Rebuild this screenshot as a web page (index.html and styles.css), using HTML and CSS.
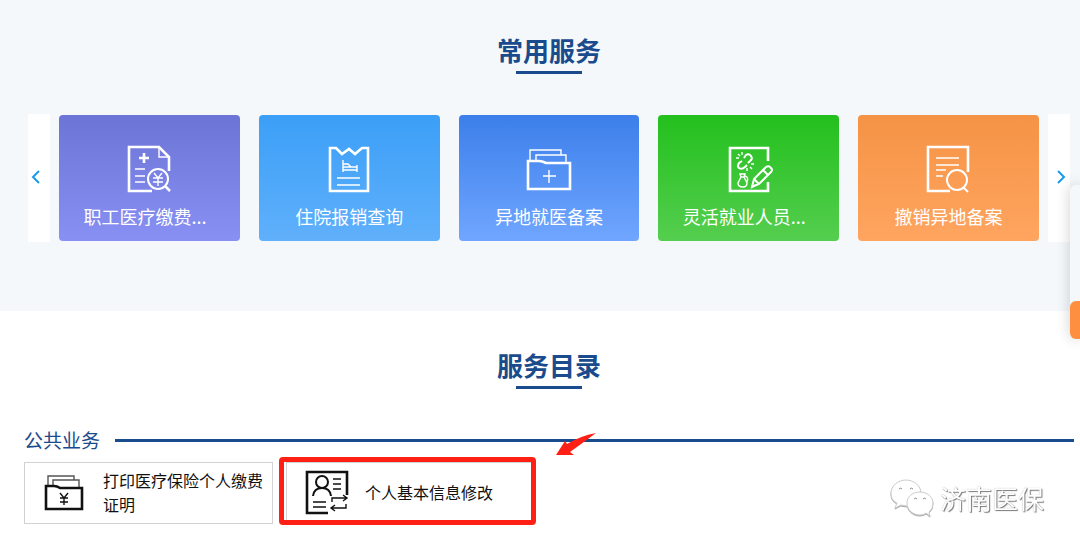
FILE: index.html
```html
<!DOCTYPE html>
<html lang="zh-CN">
<head>
    <meta charset="UTF-8">
    <meta name="viewport" content="width=device-width, initial-scale=1.0">
    <title>医保服务</title>
    <link rel="stylesheet" href="styles.css">
</head>
<body>

    <!-- 常用服务 -->
    <section class="common">
        <h2 class="title">常用服务</h2>
        <div class="slider">
            <button class="arrow arrow-left" type="button" aria-label="上一页">
                <svg width="10" height="16" viewBox="0 0 10 16"><path d="M8 1L2 7l6 6"/></svg>
            </button>
            <ul class="cards">
                <li><a class="card purple" href="#">
                    <svg class="icon" viewBox="0 0 48 48">
                        <path class="bold" d="M27 46H4V2H34L44 12V26"/>
                        <path d="M34 2V12H44M10 24H20M10 31H20M10 37H20"/>
                        <path class="bold" d="M19 8V18M14 13H24M40 41L45 46"/>
                        <circle class="mid" cx="33" cy="34" r="10"/>
                        <path d="M29 28L33 33L37 28M33 33V41M28 33H38M28 37H38"/>
                    </svg>
                    <span class="long">职工医疗缴费...</span>
                </a></li>
                <li><a class="card sky" href="#">
                    <svg class="icon" viewBox="0 0 48 48">
                        <path class="bold" d="M5 3H11L17 9L24 4L30 9L37 3H43V46H5Z"/>
                        <path d="M18 15V27M18 25H32M32 20V27M18 22H32M18 19H23L26 22M12 33H35M12 40H35"/>
                    </svg>
                    <span>住院报销查询</span>
                </a></li>
                <li><a class="card blue" href="#">
                    <svg class="icon" viewBox="0 0 48 48">
                        <path d="M5 16V5H36V10M11 16V10H41V18M24 25V38M18 31H31"/>
                        <path class="bold" d="M3 16H14Q17 16 21 18H45V44H3Z"/>
                    </svg>
                    <span>异地就医备案</span>
                </a></li>
                <li><a class="card green" href="#">
                    <svg class="icon" viewBox="0 0 48 48">
                        <path class="bold" d="M43 16V3H5V46H43V37"/>
                        <path class="mid" d="M27 42L29 34L41 22Q44 20 46 23Q48 25 46 27L34 39ZM29 34L34 39M38 25L43 30M27 42L31 40"/>
                        <path class="mid" d="M19 13L21 10Q24 8 26 11Q28 14 25 16L23 18M17 16L14 18Q12 21 14 23Q17 25 20 22L22 20"/>
                        <path d="M13 9L15 11M17 7V10M11 13H14M25 22L27 24M22 23V26M26 19H29"/>
                        <path d="M15 29H20L19 32L22 38Q22 42 18 42Q13 42 13 38L16 32ZM16 32H19M20 31Q24 32 22 37"/>
                    </svg>
                    <span class="long">灵活就业人员...</span>
                </a></li>
                <li><a class="card orange" href="#">
                    <svg class="icon" viewBox="0 0 48 48">
                        <path class="bold" d="M25 46H3V2H43V27"/>
                        <path d="M11 13H34M11 20H34M11 25H21M11 31H18"/>
                        <circle class="mid" cx="32" cy="35" r="10"/>
                        <path class="mid" d="M38 42L43 47"/>
                    </svg>
                    <span>撤销异地备案</span>
                </a></li>
            </ul>
            <button class="arrow arrow-right" type="button" aria-label="下一页">
                <svg width="10" height="16" viewBox="0 0 10 16"><path d="M2 1l6 6-6 6"/></svg>
            </button>
        </div>
    </section>

    <!-- 服务目录 -->
    <section class="catalog">
        <h2 class="title">服务目录</h2>
        <h3 class="group">公共业务</h3>
        <ul class="items">
            <li><a class="item" href="#">
                <svg class="icon" viewBox="0 0 48 48">
                    <path class="gray" d="M8 18V8H34V12M13 18V12H39V20"/>
                    <path class="bold" d="M6 18H14Q17 18 20 20H42V41H6Z"/>
                    <path d="M20 25L24 30L28 25M24 30V37M20 30H28M20 34H28"/>
                </svg>
                <span>打印医疗保险个人缴费证明</span>
            </a></li>
            <li class="marked">
                <a class="item" href="#">
                    <svg class="icon" viewBox="0 0 48 48">
                        <path class="bold" d="M26 45H5V4H45V27"/>
                        <circle class="mid" cx="20" cy="14" r="6"/>
                        <path class="mid" d="M11 28Q12 20 20 20Q28 20 29 28"/>
                        <path d="M31 11H39M31 16H39M31 21H39M11 34H24M11 39H24"/>
                        <path d="M30 34V30H44M41 27L45 30L41 33M44 36V40H30M33 37L29 40L33 43"/>
                    </svg>
                    <span>个人基本信息修改</span>
                </a>
                <svg class="pointer" width="40" height="24" viewBox="0 0 40 24">
                    <path d="M0 23L9 9L11 12Q24 4 40 1Q28 10 14 20L18 23Z"/>
                </svg>
            </li>
        </ul>
    </section>

    <!-- 右侧悬浮栏 -->
    <aside class="side"><div class="side-btn"></div></aside>

    <div class="account">
        <svg width="44" height="40" viewBox="0 0 44 40">
            <path d="M16 2C8 2 1 8 1 15C1 20 3 23 7 25L5 30L11 27Q17 29 21 27Q31 24 31 15C31 8 24 2 16 2Z"/>
            <path d="M30 14C22 14 17 19 17 25C17 32 23 37 30 37Q34 37 36 35L40 38L39 34Q43 31 43 25C43 19 37 14 30 14Z"/>
            <path class="eye" d="M9 11a2 2 0 0 1 3 0M20 11a2 2 0 0 1 3 0M24 21a2 2 0 0 1 3 0M33 21a2 2 0 0 1 3 0"/>
        </svg>
        <span>济南医保</span>
    </div>

</body>
</html>
```
FILE: styles.css
```css
* {
    margin: 0;
    padding: 0;
    box-sizing: border-box;
}

body {
    font-family: "Microsoft YaHei", "Noto Sans CJK SC", sans-serif;
    background: #fff;
    color: #111;
    min-height: 100vh;
}

ul {
    list-style: none;
}

a {
    color: inherit;
    text-decoration: none;
}

.title {
    color: #1a4b8c;
    font-size: 26px;
    line-height: 30px;
    text-align: center;
}

.title::after {
    content: "";
    display: block;
    width: 66px;
    height: 3px;
    margin: 6px auto 0;
    background: #1a4b8c;
}

.icon {
    width: 48px;
    height: 48px;
    flex: none;
    fill: none;
    stroke: currentColor;
    stroke-width: 1.4;
}

.icon .mid {
    stroke-width: 2;
}

.icon .bold {
    stroke-width: 2.6;
}

/* 常用服务 */
.common {
    background: #f4f8fb;
    padding: 35px 10px 69px 28px;
}

.slider {
    display: flex;
    align-items: center;
    gap: 9px;
    margin-top: 40px;
}

.arrow {
    width: 22px;
    height: 128px;
    flex: none;
    display: flex;
    align-items: center;
    border: none;
    background: #fff;
    cursor: pointer;
}

.arrow-left {
    padding-left: 3px;
}

.arrow-right {
    justify-content: flex-end;
    padding-right: 4px;
}

.arrow svg {
    fill: none;
    stroke: #1b9be8;
    stroke-width: 2;
}

.cards {
    flex: 1;
    display: grid;
    grid-template-columns: repeat(5, 1fr);
    gap: 19px;
}

.card {
    height: 126px;
    display: flex;
    flex-direction: column;
    align-items: center;
    padding-top: 30px;
    border-radius: 4px;
    color: #fff;
    font-size: 18px;
    line-height: 26px;
    white-space: nowrap;
}

.card span {
    margin-top: 10px;
}

.card .long {
    width: 132px;
}

.purple {
    background: linear-gradient(#6c75d6, #8890f3);
}

.sky {
    background: linear-gradient(#3b9ff7, #60b0fb);
}

.blue {
    background: linear-gradient(#3c7fea, #70a6ff);
}

.green {
    background: linear-gradient(#23c01d, #55ce4f);
}

.orange {
    background: linear-gradient(#f59345, #ffa560);
}

/* 服务目录 */
.catalog {
    padding: 39px 6px 20px 24px;
}

.group {
    display: flex;
    align-items: center;
    gap: 15px;
    margin-top: 37px;
    color: #1a4b8c;
    font-size: 19px;
    font-weight: normal;
    line-height: 28px;
}

.group::after {
    content: "";
    flex: 1;
    height: 3px;
    background: #1a4b8c;
}

.items {
    display: grid;
    grid-template-columns: repeat(4, 1fr);
    gap: 13px;
    margin-top: 8px;
    padding-right: 15px;
}

.item {
    display: flex;
    align-items: center;
    gap: 15px;
    height: 62px;
    padding: 0 0 2px 15px;
    border: 1px solid #d2d2d2;
    font-size: 16px;
    line-height: 24px;
}

.item .gray {
    stroke: #555;
}

/* 红框标注 */
.marked {
    position: relative;
}

.marked::after {
    content: "";
    position: absolute;
    inset: -5px -1px -1px -7px;
    border: 5px solid #ff2015;
    border-radius: 4px;
}

.pointer {
    position: absolute;
    left: 270px;
    top: -30px;
    fill: #ff2015;
}

/* 右侧悬浮栏 */
.side {
    position: fixed;
    top: 185px;
    right: 0;
    width: 10px;
    height: 154px;
    display: flex;
    align-items: flex-end;
    background: #f4f8fb;
    border-radius: 6px 0 0 6px;
    box-shadow: 0 0 14px rgba(0, 0, 0, 0.2);
}

.side-btn {
    width: 100%;
    height: 38px;
    background: #ff8f40;
    border-radius: 6px 0 0 6px;
}

/* 公众号 */
.account {
    position: fixed;
    right: 36px;
    bottom: 29px;
    display: flex;
    align-items: center;
    gap: 6px;
    color: #fff;
    font-size: 26px;
    line-height: 40px;
    text-shadow: 1px 1px 1px #777, 0 0 1px #aaa;
}

.account svg {
    fill: #fff;
    stroke: #ccc;
    stroke-width: 1;
    filter: drop-shadow(0 1px 0 #aaa);
}

.account .eye {
    fill: none;
    stroke: #888;
}
```
